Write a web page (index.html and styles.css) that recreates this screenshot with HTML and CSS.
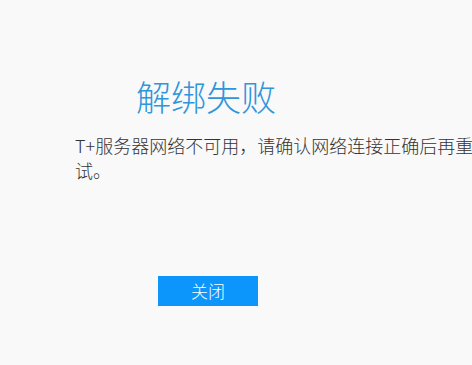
FILE: index.html
```html
<!DOCTYPE html>
<html lang="zh-CN">
<head>
<meta charset="utf-8">
<title>解绑失败</title>
<link rel="stylesheet" href="styles.css">
</head>
<body>
<div class="dialog">
  <h1 class="title">解绑失败</h1>
  <p class="message">T+服务器网络不可用，请确认网络连接正确后再重试。</p>
  <div class="actions">
    <button class="close-btn" type="button">关闭</button>
  </div>
</div>
</body>
</html>
```

FILE: styles.css
```css
html, body {
  margin: 0;
  padding: 0;
  background: #f9f9f9;
  overflow: hidden;
}
.dialog {
  width: 472px;
  height: 365px;
  padding-top: 76px;
  box-sizing: border-box;
  font-family: "Noto Sans CJK SC", "Noto Sans", sans-serif;
}
.title {
  margin: 0 0 0 136px;
  font-size: 35px;
  line-height: 40px;
  font-weight: 300;
  color: #2f95dc;
  letter-spacing: 0;
}
.message {
  margin: 17px 0 0 75px;
  width: 402px;
  font-size: 18px;
  line-height: 25px;
  font-weight: 300;
  color: #333333;
}
.actions {
  margin: 93px 0 0 158px;
}
.close-btn {
  display: block;
  width: 100px;
  height: 30px;
  border: 0;
  padding: 0;
  background: #0c95fa;
  color: #ffffff;
  font-family: "Noto Sans CJK SC", "Noto Sans", sans-serif;
  font-size: 17px;
  font-weight: 300;
  line-height: 30px;
}
```
